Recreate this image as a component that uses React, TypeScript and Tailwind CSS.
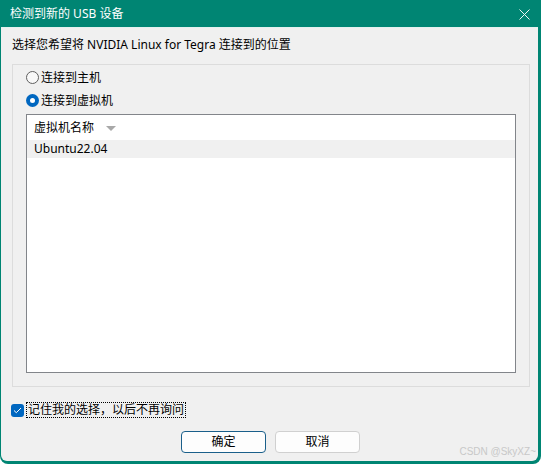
import React from 'react';

const font = { fontFamily: '"Noto Sans", "Noto Sans CJK SC", sans-serif' };

const Radio = ({ checked, label }: { checked?: boolean; label: string }) => (
  <div className="flex items-center h-[23px]">
    {checked ? (
      <span className="w-[13px] h-[13px] rounded-full bg-[#0067c0] flex items-center justify-center">
        <span className="w-[5px] h-[5px] rounded-full bg-white" />
      </span>
    ) : (
      <span className="w-[13px] h-[13px] rounded-full border border-[#5f5f5f] bg-[#f8f8f8]" />
    )}
    <span className="ml-[2px] text-[12px] leading-none text-black">{label}</span>
  </div>
);

const App = () => {
  return (
    <div className="w-[541px] h-[464px] bg-[#008573] flex flex-col rounded-b-[8px] overflow-hidden" style={font}>
      {/* title bar */}
      <div className="h-[27px] flex items-center justify-between pl-[10px] pr-[11px] text-white">
        <span className="text-[12px] leading-none">检测到新的 USB 设备</span>
        <svg width="11" height="11" viewBox="0 0 11 11" className="mt-[1px]">
          <path d="M0.5 0.5 L10.5 10.5 M10.5 0.5 L0.5 10.5" stroke="#eaf6f4" strokeWidth="1" />
        </svg>
      </div>

      {/* body */}
      <div className="flex-1 ml-[1px] mr-[3px] mb-[3px] bg-[#f0f0f0] rounded-b-[6px] flex flex-col relative">
        <div className="h-[1px] bg-[#e4f1ef]" />
        <div className="pl-[11px] pt-[10px] text-[12px] leading-[14px] text-black">
          选择您希望将 NVIDIA Linux for Tegra 连接到的位置
        </div>

        {/* group box */}
        <div className="ml-[11px] mr-[8px] mt-[12px] h-[323px] border border-[#dcdcdc] flex flex-col pl-[13px] pr-[13px] pt-[1px]">
          <Radio label="连接到主机" />
          <Radio checked label="连接到虚拟机" />

          <div className="mt-[2px] h-[259px] border border-[#82858a] bg-white flex flex-col">
            <div className="h-[25px] flex items-center pl-[7px] mr-[2px]">
              <span className="text-[12px] leading-none text-black">虚拟机名称</span>
              <svg width="10" height="6" viewBox="0 0 10 6" className="ml-[12px] mt-[2px]">
                <path d="M0 0 L10 0 L5 5 Z" fill="#a8a8a8" />
              </svg>
            </div>
            <div className="h-[18px] bg-[#f0f0f0] flex items-center pl-[7px]">
              <span className="text-[12px] leading-none text-black">Ubuntu22.04</span>
            </div>
          </div>
        </div>

        {/* remember checkbox */}
        <div className="mt-[15px] ml-[10px] flex items-center">
          <span className="w-[13px] h-[13px] rounded-[3px] bg-[#0067c0] flex items-center justify-center">
            <svg width="9" height="7" viewBox="0 0 9 7">
              <path d="M1 3.5 L3.3 5.7 L8 1" stroke="white" strokeWidth="1" fill="none" />
            </svg>
          </span>
          <span className="ml-[2px] border border-dotted border-black px-[1px] h-[16px] flex items-center text-[12px] leading-none text-black">
            记住我的选择，以后不再询问
          </span>
        </div>

        {/* buttons */}
        <div className="mt-[13px] flex justify-center gap-[9px] pl-[2px]">
          <button className="w-[85px] h-[22px] rounded-[4px] border border-[#1a5f8a] bg-[#fdfdfd] text-[12px] leading-none text-black" style={font}>
            确定
          </button>
          <button className="w-[85px] h-[22px] rounded-[4px] border border-[#d0d0d0] bg-[#fdfdfd] text-[12px] leading-none text-black" style={font}>
            取消
          </button>
        </div>

        <span className="absolute right-[2px] bottom-[4px] text-[10px] leading-none text-[#c8c8c8]" style={{ fontFamily: '"Liberation Sans", sans-serif' }}>
          CSDN @SkyXZ~
        </span>
      </div>
    </div>
  );
};

export default App;
